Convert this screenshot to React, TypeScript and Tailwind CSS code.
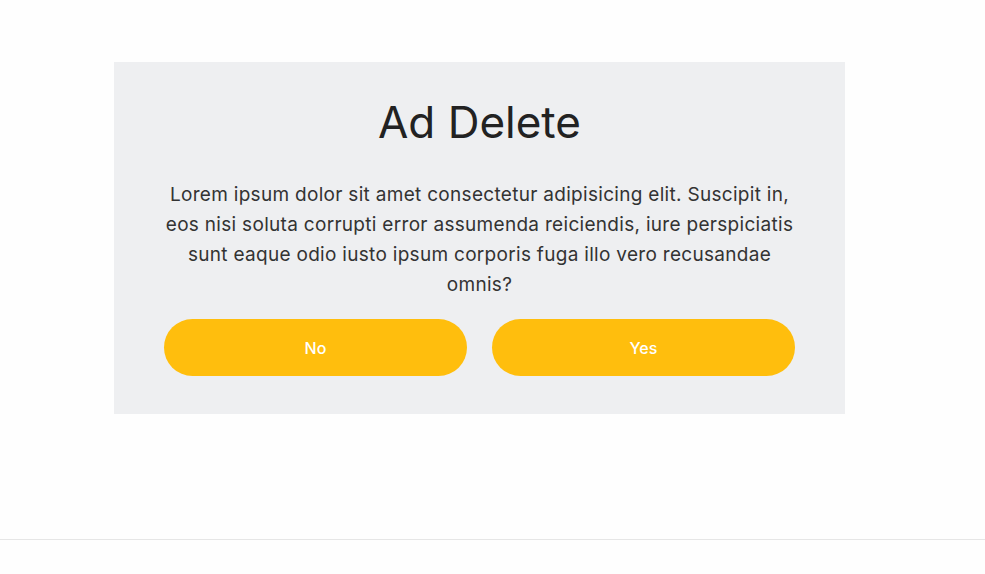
export default function App() {
  return (
    <div className="min-h-[574px] bg-[#fefefe] font-['Inter',sans-serif]">
      <div className="h-[539px] pt-[62px] pl-[114px]">
        <div className="w-[731px] bg-[#eeeff1] px-[50px] pt-[34px] pb-[38px] text-center">
          <h1 className="text-[44px] leading-[53px] font-normal text-[#222222]">Ad Delete</h1>
          <p className="mt-[31px] text-[19px] leading-[30px] tracking-[0.3px] text-[#333333]">
            Lorem ipsum dolor sit amet consectetur adipisicing elit. Suscipit in, eos nisi soluta corrupti error
            assumenda reiciendis, iure perspiciatis sunt eaque odio iusto ipsum corporis fuga illo vero recusandae
            omnis?
          </p>
          <div className="mt-[19px] flex gap-[25px]">
            <button
              type="button"
              className="h-[57px] flex-1 rounded-full bg-[#ffbe0d] text-[16px] font-medium text-white"
            >
              No
            </button>
            <button
              type="button"
              className="h-[57px] flex-1 rounded-full bg-[#ffbe0d] text-[16px] font-medium text-white"
            >
              Yes
            </button>
          </div>
        </div>
      </div>
      <div className="border-t border-[#e6e6e6]" />
    </div>
  )
}
